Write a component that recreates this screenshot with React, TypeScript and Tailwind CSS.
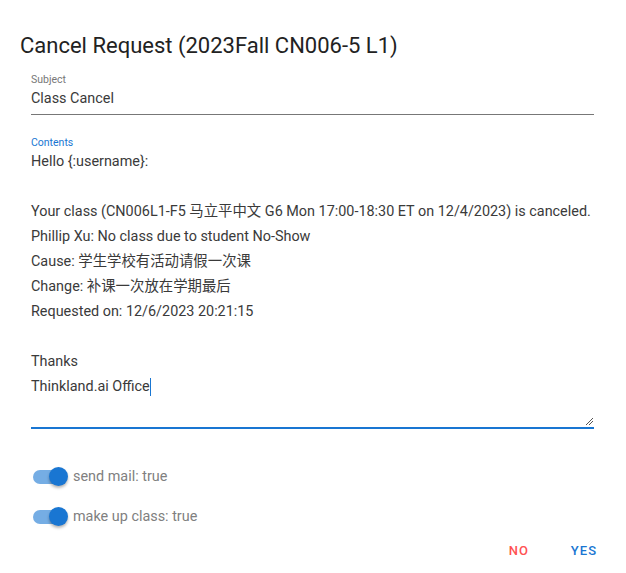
const lines = [
  "Hello {:username}:",
  "",
  "Your class (CN006L1-F5 马立平中文 G6 Mon 17:00-18:30 ET on 12/4/2023) is canceled.",
  "Phillip Xu: No class due to student No-Show",
  "Cause: 学生学校有活动请假一次课",
  "Change: 补课一次放在学期最后",
  "Requested on: 12/6/2023 20:21:15",
  "",
  "Thanks",
];

function Toggle({ label }: { label: string }) {
  return (
    <div className="flex items-center h-[40px]">
      <div className="relative w-[35px] h-[20px] ml-[22px] mr-[5px] flex items-center">
        <div className="w-[30px] h-[14px] rounded-full bg-[#1976d2] opacity-60" />
        <div className="absolute left-[16px] top-0 w-[19px] h-[19px] rounded-full bg-[#1976d2] shadow-[0_2px_3px_rgba(0,0,0,0.3)]" />
      </div>
      <span className="text-[14.4px] text-[#808080]">{label}</span>
    </div>
  );
}

export default function App() {
  return (
    <div className="w-[626px] h-[573px] bg-white font-['Roboto','Noto_Sans_CJK_SC',sans-serif] text-[#3a3a3a]">
      <h1 className="pt-[32px] pl-[20px] text-[22px] leading-[28px] text-[#222]">
        Cancel Request (2023Fall CN006-5 L1)
      </h1>

      <div className="pl-[31px] pr-[32px] pt-[12px]">
        <div className="border-b border-[#777] pb-[5px]">
          <div className="text-[10.5px] leading-[16px] text-[#777]">Subject</div>
          <div className="text-[14.4px] leading-[21px]">Class Cancel</div>
        </div>

        <div className="mt-[22px] relative border-b-2 border-[#1976d2]">
          <div className="text-[10.5px] leading-[12px] text-[#1976d2]">Contents</div>
          <div className="text-[14.4px] leading-[25px] pb-[28px]">
            {lines.map((l, i) => (
              <div key={i} className="h-[25px] whitespace-nowrap">{l}</div>
            ))}
            <div className="h-[25px] whitespace-nowrap">
              Thinkland.ai Office<span className="inline-block w-px h-[18px] bg-[#1976d2] align-middle" />
            </div>
          </div>
          <svg className="absolute right-0 bottom-[1px]" width="10" height="10" viewBox="0 0 10 10">
            <path d="M9 2 L2 9 M9 5 L5 9" stroke="#555" strokeWidth="1" />
          </svg>
        </div>
      </div>

      <div className="mt-[28px] pl-[11px]">
        <Toggle label="send mail: true" />
        <Toggle label="make up class: true" />
      </div>

      <div className="flex justify-end gap-[42px] pr-[29px] mt-[4px]">
        <span className="text-[13px] font-medium tracking-[1px] text-[#ff5252]">NO</span>
        <span className="text-[13px] font-medium tracking-[1px] text-[#1976d2]">YES</span>
      </div>
    </div>
  );
}
